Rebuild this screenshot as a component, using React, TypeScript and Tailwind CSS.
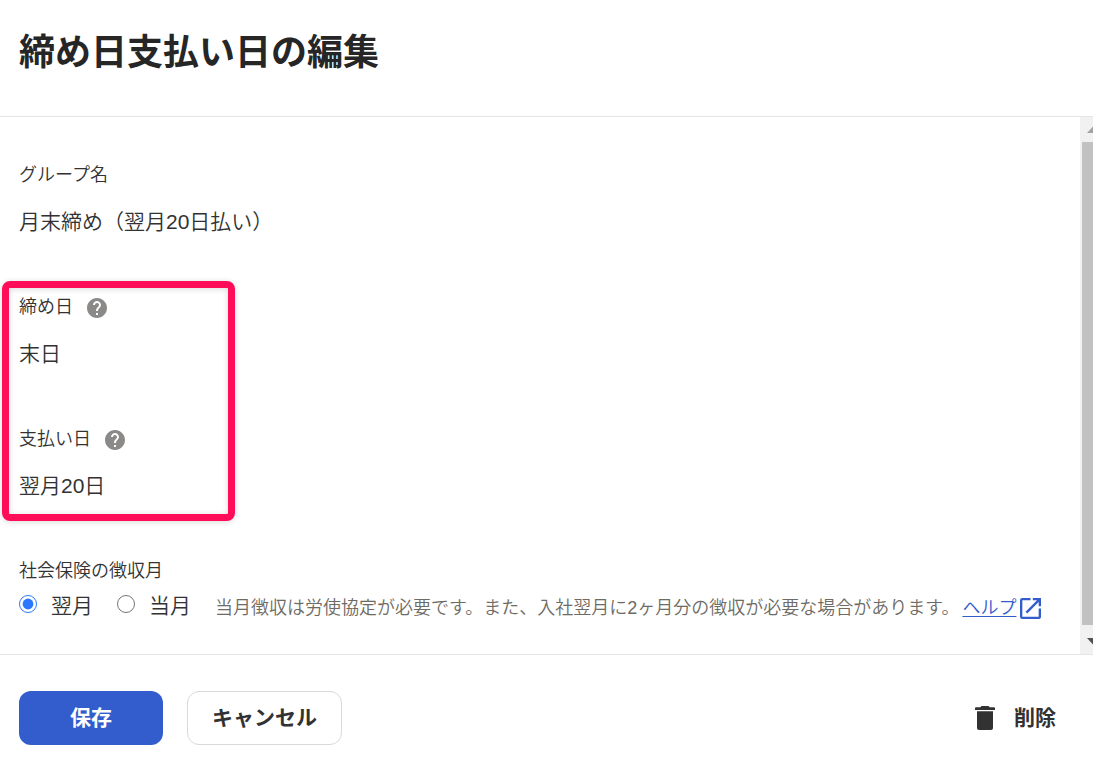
import React, { useId, useState } from 'react';

const HelpIcon = () => (
  <svg viewBox="2 2 20 20" className="h-5 w-5" fill="#8c8989" aria-hidden="true">
    <path d="M12 2C6.48 2 2 6.48 2 12s4.48 10 10 10 10-4.48 10-10S17.52 2 12 2zm1 17h-2v-2h2v2zm2.07-7.75l-.9.92C13.45 12.9 13 13.5 13 15h-2v-.5c0-1.1.45-2.1 1.17-2.83l1.24-1.26c.37-.36.59-.86.59-1.41 0-1.1-.9-2-2-2s-2 .9-2 2H8c0-2.21 1.79-4 4-4s4 1.79 4 4c0 .88-.36 1.68-.93 2.25z" />
  </svg>
);

const ExternalIcon = () => (
  <svg viewBox="3 3 18 18" className="h-[21px] w-[21px] shrink-0" fill="#335ccc" aria-hidden="true">
    <path d="M19 19H5V5h7V3H5a2 2 0 0 0-2 2v14a2 2 0 0 0 2 2h14c1.1 0 2-.9 2-2v-7h-2v7zM14 3v2h3.59l-9.83 9.83 1.41 1.41L19 6.41V10h2V3h-7z" />
  </svg>
);

const TrashIcon = () => (
  <svg viewBox="0 0 20 24" className="h-6 w-5" fill="#323232" aria-hidden="true">
    <path d="M6.500 0h7l1.200 1.200H19a1 1 0 0 1 1 1V4H0V2.200a1 1 0 0 1 1-1h4.300z" />
    <path d="M2 5.300h16V22a2 2 0 0 1-2 2H4a2 2 0 0 1-2-2z" />
  </svg>
);

type FieldProps = {
  label: string;
  value: string;
  help?: boolean;
};

const Field = ({ label, value, help }: FieldProps) => (
  <div>
    <dt className="flex items-center gap-3.5 text-lg leading-6">
      {label}
      {help && (
        <button type="button" className="mt-0.5" aria-label={`${label}のヘルプ`}>
          <HelpIcon />
        </button>
      )}
    </dt>
    <dd className="mt-[19px] text-[21px] leading-8">{value}</dd>
  </div>
);

const MONTHS = ['翌月', '当月'];

const App = () => {
  const [month, setMonth] = useState('翌月');
  const groupId = useId();

  return (
    <div className="flex min-h-screen flex-col bg-white font-['Liberation_Sans','Noto_Sans_CJK_JP',sans-serif] text-[#323232]">
      <header className="border-b border-[#e5e5e5] px-[19px] pt-[33px] pb-[43px]">
        <h1 className="text-4xl leading-10 font-bold text-[#262626]">締め日支払い日の編集</h1>
      </header>

      <main className="flex flex-1">
        <div className="min-w-0 flex-1 px-[19px] pt-[46px] pb-8 font-[350]">
          <dl className="flex flex-col gap-[57px]">
            <Field label="グループ名" value="月末締め（翌月20日払い）" />
            <div className="relative flex flex-col gap-[57px]">
              <Field label="締め日" value="末日" help />
              <Field label="支払い日" value="翌月20日" help />
              {/* Highlight frame */}
              <div className="pointer-events-none absolute -top-3.5 -bottom-[19px] -left-[17px] w-[233px] rounded-lg border-[7px] border-[#ff0d58] shadow-[0_1px_6px_rgba(0,0,0,0.15),inset_0_1px_6px_rgba(0,0,0,0.15)]" />
            </div>
          </dl>

          <fieldset className="mt-[57px]">
            <legend className="text-lg leading-6">社会保険の徴収月</legend>
            <div className="mt-[7px] flex flex-wrap items-end">
              {MONTHS.map((m) => (
                <div key={m} className="mr-6 flex items-center gap-3.5">
                  <input
                    type="radio"
                    id={`${groupId}-${m}`}
                    name="month"
                    checked={month === m}
                    onChange={() => setMonth(m)}
                    className="mb-1 h-[18px] w-[18px] accent-[#2b78ff]"
                  />
                  <label htmlFor={`${groupId}-${m}`} className="text-[21px] leading-8">{m}</label>
                </div>
              ))}
              <p className="flex items-center text-lg leading-7 text-[#6e6b65]">
                当月徴収は労使協定が必要です。また、入社翌月に2ヶ月分の徴収が必要な場合があります。
                <a href="#help" className="ml-[3px] flex items-center gap-1 text-[#335ccc]">
                  <span className="underline underline-offset-2">ヘルプ</span>
                  <ExternalIcon />
                </a>
              </p>
            </div>
          </fieldset>
        </div>

        {/* Scrollbar */}
        <div className="flex w-[13px] shrink-0 flex-col overflow-hidden bg-[#f1f1f1] pl-0.5" aria-hidden="true">
          <svg viewBox="0 0 11 25" className="h-[25px] w-[11px]" fill="#a3a3a3">
            <path d="M5 16L11 9.500V16z" />
          </svg>
          <div className="flex-1 bg-[#c1c1c1]" />
          <svg viewBox="0 0 11 29" className="h-[29px] w-[11px]" fill="#505050">
            <path d="M5 13H11V19.500z" />
          </svg>
        </div>
      </main>

      <footer className="flex items-center gap-6 border-t border-[#e5e5e5] px-[19px] pt-9 pb-[27px] text-[21px] leading-8 font-bold">
        <button type="button" className="h-[54px] w-36 rounded-xl bg-[#335ccc] text-white">保存</button>
        <button type="button" className="h-[54px] rounded-xl border border-[#d9d9d9] bg-white px-6">キャンセル</button>
        <button type="button" className="mr-[18px] ml-auto flex items-center gap-[19px]">
          <TrashIcon />
          削除
        </button>
      </footer>
    </div>
  );
};

export default App;
